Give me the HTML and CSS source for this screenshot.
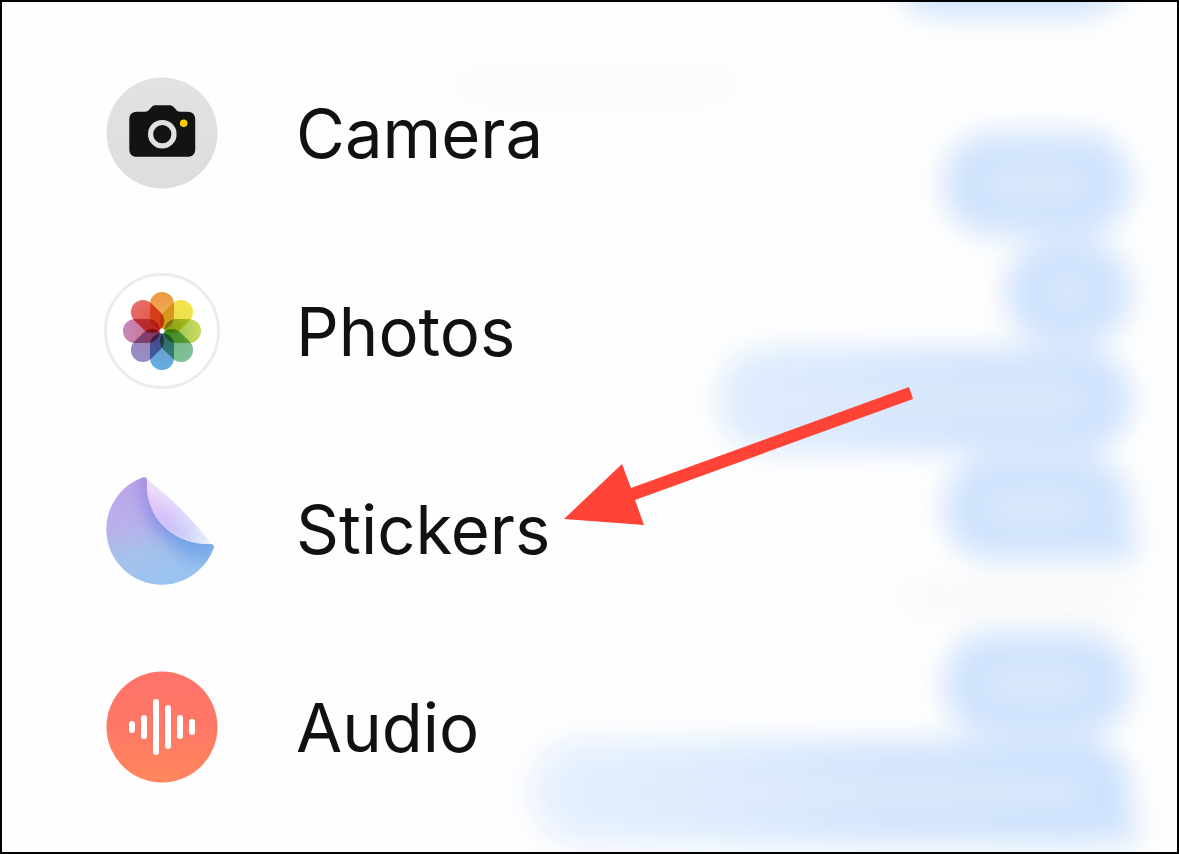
FILE: index.html
```html
<!DOCTYPE html>
<html lang="en">
<head>
    <meta charset="UTF-8">
    <meta name="viewport" content="width=device-width, initial-scale=1.0">
    <title>Messages</title>
    <link rel="stylesheet" href="styles.css">
</head>
<body>
    <main class="frame">
        <!-- blurred conversation behind the menu -->
        <div class="chat" aria-hidden="true">
            <div class="bubble first"></div>
            <div class="stamp center"></div>
            <div class="bubble"></div>
            <div class="bubble tiny"></div>
            <div class="bubble medium"></div>
            <div class="bubble tail"></div>
            <div class="stamp"></div>
            <div class="bubble"></div>
            <div class="bubble large tail"></div>
        </div>

        <ul class="menu">
            <li>
                <button class="menu-item" type="button">
                    <svg class="icon" viewBox="0 0 116 116" aria-hidden="true">
                        <defs>
                            <linearGradient id="cameraBg" x1="0" y1="0" x2="0" y2="1">
                                <stop offset="0" stop-color="#e1e2e4"/>
                                <stop offset="1" stop-color="#dcdddf"/>
                            </linearGradient>
                        </defs>
                        <circle cx="58" cy="58" r="55.5" fill="url(#cameraBg)"/>
                        <path fill="#131313" d="M33 36.7H41C43 36.7 44 36 45.3 34.5L47.2 32.4C48.7 30.8 50 30.3 52 30.3H65C67 30.3 68.5 30.8 70 32.4L72 34.5C73.3 36 74.3 36.7 76.3 36.7H83.5C88.5 36.7 91.2 39.5 91.2 44.3V74.2C91.2 79 88.5 81.8 83.5 81.8H33C28 81.8 25.3 79 25.3 74.2V44.3C25.3 39.5 28 36.7 33 36.7Z"/>
                        <circle cx="58.3" cy="59.2" r="11.7" fill="none" stroke="#dfe0e0" stroke-width="5.2"/>
                        <circle cx="79.7" cy="48.3" r="3.8" fill="#ffcc00"/>
                    </svg>
                    <span class="label">Camera</span>
                </button>
            </li>
            <li>
                <button class="menu-item" type="button">
                    <svg class="icon" viewBox="0 0 116 116" aria-hidden="true">
                        <defs>
                            <linearGradient id="p1" x1="0" y1="0" x2="0" y2="1"><stop offset="0" stop-color="#ec9740"/><stop offset="1" stop-color="#edbd62"/></linearGradient>
                            <linearGradient id="p2" x1="0" y1="0" x2="0" y2="1"><stop offset="0" stop-color="#f6e54b"/><stop offset="1" stop-color="#e3d64e"/></linearGradient>
                            <linearGradient id="p3" x1="0" y1="0" x2="0" y2="1"><stop offset="0" stop-color="#cbdb60"/><stop offset="1" stop-color="#8dbd4b"/></linearGradient>
                            <linearGradient id="p4" x1="0" y1="0" x2="0" y2="1"><stop offset="0" stop-color="#82bf9d"/><stop offset="1" stop-color="#6dbb78"/></linearGradient>
                            <linearGradient id="p5" x1="0" y1="0" x2="0" y2="1"><stop offset="0" stop-color="#63afe2"/><stop offset="1" stop-color="#7193c9"/></linearGradient>
                            <linearGradient id="p6" x1="0" y1="0" x2="0" y2="1"><stop offset="0" stop-color="#9190c7"/><stop offset="1" stop-color="#a87dac"/></linearGradient>
                            <linearGradient id="p7" x1="0" y1="0" x2="0" y2="1"><stop offset="0" stop-color="#c48abb"/><stop offset="1" stop-color="#d46a83"/></linearGradient>
                            <linearGradient id="p8" x1="0" y1="0" x2="0" y2="1"><stop offset="0" stop-color="#e4706d"/><stop offset="1" stop-color="#e74c38"/></linearGradient>
                        </defs>
                        <circle cx="58" cy="58" r="56.5" fill="#fff" stroke="#ececec" stroke-width="3"/>
                        <g class="petals" transform="translate(58 58)">
                            <rect x="-12" y="-39" width="24" height="37" rx="12" fill="url(#p1)"/>
                            <rect x="-12" y="-39" width="24" height="37" rx="12" fill="url(#p2)" transform="rotate(45)"/>
                            <rect x="-12" y="-39" width="24" height="37" rx="12" fill="url(#p3)" transform="rotate(90)"/>
                            <rect x="-12" y="-39" width="24" height="37" rx="12" fill="url(#p4)" transform="rotate(135)"/>
                            <rect x="-12" y="-39" width="24" height="37" rx="12" fill="url(#p5)" transform="rotate(180)"/>
                            <rect x="-12" y="-39" width="24" height="37" rx="12" fill="url(#p6)" transform="rotate(225)"/>
                            <rect x="-12" y="-39" width="24" height="37" rx="12" fill="url(#p7)" transform="rotate(270)"/>
                            <rect x="-12" y="-39" width="24" height="37" rx="12" fill="url(#p8)" transform="rotate(315)"/>
                        </g>
                        <circle cx="58" cy="58" r="2.5" fill="#fff"/>
                    </svg>
                    <span class="label">Photos</span>
                </button>
            </li>
            <li>
                <button class="menu-item" type="button">
                    <svg class="icon" viewBox="0 0 116 116" aria-hidden="true">
                        <defs>
                            <linearGradient id="stickerBase" x1="0.25" y1="0.1" x2="0.5" y2="1">
                                <stop offset="0" stop-color="#bba6e8"/>
                                <stop offset="0.35" stop-color="#b9b0ea"/>
                                <stop offset="0.65" stop-color="#a6c1ec"/>
                                <stop offset="1" stop-color="#98c4f0"/>
                            </linearGradient>
                            <linearGradient id="stickerShade" gradientUnits="userSpaceOnUse" x1="35" y1="8" x2="108" y2="80">
                                <stop offset="0" stop-color="#a583e2"/>
                                <stop offset="0.45" stop-color="#7f8be6"/>
                                <stop offset="0.7" stop-color="#70a0e6"/>
                                <stop offset="1" stop-color="#78ace9"/>
                            </linearGradient>
                            <linearGradient id="stickerFold" gradientUnits="userSpaceOnUse" x1="43" y1="8" x2="108" y2="73">
                                <stop offset="0" stop-color="#ecccf5"/>
                                <stop offset="0.45" stop-color="#d2c0fa"/>
                                <stop offset="0.7" stop-color="#c9caf8"/>
                                <stop offset="1" stop-color="#e0f0fb"/>
                            </linearGradient>
                            <linearGradient id="stickerShine" gradientUnits="userSpaceOnUse" x1="65" y1="51" x2="77" y2="38">
                                <stop offset="0" stop-color="#fff" stop-opacity="0"/>
                                <stop offset="1" stop-color="#fff" stop-opacity="0.4"/>
                            </linearGradient>
                            <filter id="soft" x="-40%" y="-40%" width="180%" height="180%"><feGaussianBlur stdDeviation="9"/></filter>
                            <clipPath id="stickerShape">
                                <path d="M38.5 6.5C41.5 5.6 43 6.7 43.1 9.5C43 17 42.5 29 51 44C61 61 81 73 103 73H106.5C109.5 73 110.5 75 109.5 77.5A55.3 55.3 0 1 1 38.5 6.5Z"/>
                            </clipPath>
                        </defs>
                        <g clip-path="url(#stickerShape)">
                            <rect width="116" height="116" fill="url(#stickerBase)"/>
                            <path d="M37 0C39 30 43 48 57 62C70 75 84 96 116 92V40L70 0Z" fill="url(#stickerShade)" filter="url(#soft)"/>
                        </g>
                        <path d="M43.1 8.5C42.5 20 43 30 51 44C61 61 81 73 107.5 73Q78 35 43.1 8.5Z" fill="url(#stickerFold)"/>
                        <path d="M43.1 8.5C42.5 20 43 30 51 44C61 61 81 73 107.5 73Q78 35 43.1 8.5Z" fill="url(#stickerShine)"/>
                    </svg>
                    <span class="label">Stickers</span>
                </button>
            </li>
            <li>
                <button class="menu-item" type="button">
                    <svg class="icon" viewBox="0 0 116 116" aria-hidden="true">
                        <defs>
                            <linearGradient id="audioBg" x1="0" y1="0" x2="0" y2="1">
                                <stop offset="0" stop-color="#ff736a"/>
                                <stop offset="0.5" stop-color="#ff7866"/>
                                <stop offset="1" stop-color="#ff875c"/>
                            </linearGradient>
                        </defs>
                        <circle cx="58" cy="58" r="55.5" fill="url(#audioBg)"/>
                        <path d="M28 55V61M40 49V67M52 33V83M64 39V77M76 49V67M88 53V63" stroke="#fff" stroke-width="6" stroke-linecap="round"/>
                    </svg>
                    <span class="label">Audio</span>
                </button>
            </li>
        </ul>

        <svg class="arrow" viewBox="0 0 350 138" aria-hidden="true">
            <path d="M0 132L58 77L67 101L345 0L349 12L71 113L80 138Z" fill="#ff4336"/>
        </svg>
    </main>
</body>
</html>
```

FILE: styles.css
```css
* { box-sizing: border-box; }
body { margin: 0; background-color: #fff; font-family: Inter, "Liberation Sans", sans-serif; color: #111; }
.frame { position: relative; min-height: 100vh; padding: 32px 0 0 102px; border: 2px solid #000; background-color: #fefefe; overflow: hidden; }

/* chat backdrop */
.chat { position: absolute; top: -90px; left: 0; right: 46px; display: flex; flex-direction: column; align-items: flex-end; gap: 4px; filter: blur(14px); }
.bubble { position: relative; flex: none; width: 188px; height: 104px; padding: 42px 46px; border-radius: 50px; background-color: #d0e3fd; }
.bubble::before { content: ""; display: block; height: 20px; border-radius: 10px; background-color: #dfebfb; }
.bubble.first { width: 240px; }
.bubble.tiny { width: 126px; }
.bubble.medium { width: 414px; background: linear-gradient(to right, #e0edfd, #d4e5fd 50%, #cfe2fd); }
.bubble.large { width: 602px; background: linear-gradient(to right, #e9f1fe, #deecfd 30%, #d2e4fd 60%, #cce1fd); }
.bubble.tail::after { content: ""; position: absolute; right: -5px; bottom: 0; width: 48px; height: 30px; border-radius: 0 0 0 20px; background-color: #d0e3fd; }
.stamp { width: 226px; height: 26px; margin: 20px 0 18px; background-color: #f7f7f6; }
.stamp.center { width: 280px; height: 24px; margin: 54px 394px 30px 0; background-color: #fafafa; }

/* menu */
.menu { position: relative; margin: 0; padding: 0; list-style: none; }
.menu-item { display: flex; align-items: center; gap: 76px; width: 100%; height: 198px; padding: 0; border: none; background: none; color: inherit; font: inherit; text-align: left; cursor: pointer; }
.icon { flex: none; width: 116px; height: 116px; }
.petals { isolation: isolate; }
.petals rect { mix-blend-mode: multiply; }
.label { padding-top: 2px; font-size: 67px; line-height: 84px; }

.arrow { position: absolute; top: 385px; left: 562px; width: 350px; height: 138px; }
```
